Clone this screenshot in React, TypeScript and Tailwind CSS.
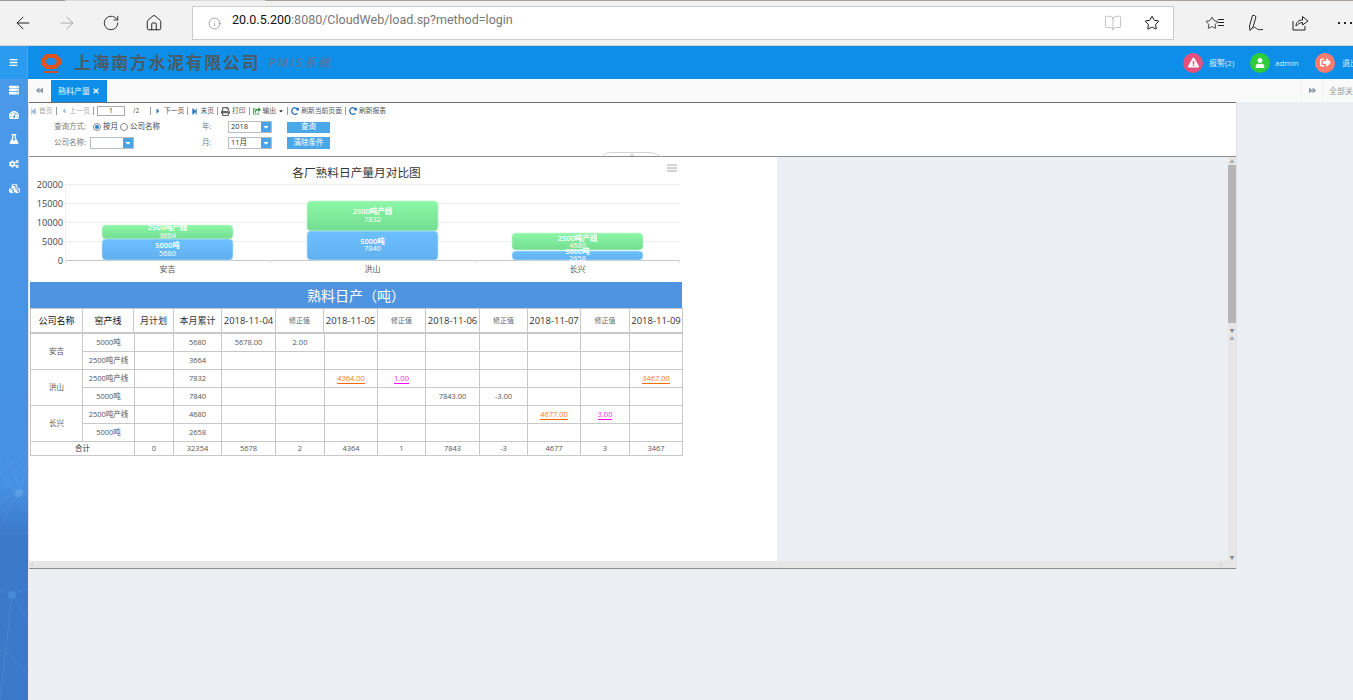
import React from "react";
import { ArrowLeft, ArrowRight, RotateCw, Home, Info, BookOpen, Star } from "lucide-react";
import {
  FaBars, FaServer, FaTachometerAlt, FaFlask, FaCogs, FaCubes, FaExclamationTriangle, FaUser, FaSignOutAlt,
  FaStepBackward, FaStepForward, FaCaretLeft, FaCaretRight, FaPrint, FaShareSquare, FaRedoAlt, FaBackward, FaForward, FaTimes, FaCaretDown,
} from "react-icons/fa";

const cjk = "font-['Open_Sans','Noto_Sans_CJK_SC',sans-serif]";

function Sep() {
  return <span className="mx-[3px] h-[8px] w-px bg-[#9a9a9a]" />;
}

function ToolBtn({ icon, label, color = "text-[#555]" }: { icon: React.ReactNode; label: string; color?: string }) {
  return (
    <span className={`flex items-center gap-[2px] whitespace-nowrap ${color}`}>
      {icon}
      {label}
    </span>
  );
}

function Combo({ value }: { value: string }) {
  return (
    <div className="flex h-[12px] w-[44px] items-center justify-between border border-[#b7bccb] bg-white">
      <span className="pl-[2px] text-[7.5px] leading-none text-[#333]">{value}</span>
      <span className="flex h-full w-[10px] items-center justify-center bg-[#4aa3e6] text-white">
        <FaCaretDown size={8} />
      </span>
    </div>
  );
}

function Toolbar() {
  return (
    <div className="h-[55px] border-y border-t-[#6f6f6f] border-b-[#8e8e8e] bg-white pl-[1px]">
      <div className="flex h-[15px] items-center pt-[1px] text-[6.8px] text-[#999]">
        <ToolBtn color="text-[#aaa]" icon={<FaStepBackward size={7} className="text-[#9db8d8]" />} label="首页" />
        <Sep />
        <ToolBtn color="text-[#aaa]" icon={<FaCaretLeft size={8} className="text-[#9db8d8]" />} label="上一页" />
        <Sep />
        <span className="flex h-[10px] w-[28px] items-center justify-center border border-[#aaa] text-[#444]">1</span>
        <span className="ml-[8px] mr-[7px] w-[7px] text-[#555]">/2</span>
        <Sep />
        <ToolBtn icon={<FaCaretRight size={8} className="text-[#2d74b8]" />} label="下一页" />
        <Sep />
        <ToolBtn icon={<FaStepForward size={7} className="text-[#2d74b8]" />} label="末页" />
        <Sep />
        <ToolBtn icon={<FaPrint size={9} className="text-[#666]" />} label="打印" />
        <Sep />
        <ToolBtn icon={<FaShareSquare size={8} className="text-[#3a9a45]" />} label="输出" />
        <FaCaretDown size={6} className="ml-[2px] text-[#333]" />
        <Sep />
        <ToolBtn icon={<FaRedoAlt size={8} className="text-[#1d6fc0]" />} label="刷新当前页面" />
        <Sep />
        <ToolBtn icon={<FaRedoAlt size={8} className="text-[#1d6fc0]" />} label="刷新报表" />
      </div>
      <div className="mt-[3px] grid grid-cols-[24px_36px_112px_26px_59px_1fr] items-center gap-y-[4px] text-[7.5px] text-[#777]">
        <span className="col-start-2 row-start-1 whitespace-nowrap">查询方式:</span>
        <div className="col-start-3 row-start-1 ml-[3px] flex items-center whitespace-nowrap text-[#444]">
          <span className="mr-[2px] flex h-[8px] w-[8px] items-center justify-center rounded-full border border-[#888]">
            <span className="h-[4px] w-[4px] rounded-full bg-[#2a7fd0]" />
          </span>
          按月
          <span className="ml-[2px] mr-[2px] h-[8px] w-[8px] rounded-full border border-[#888]" />
          公司名称
        </div>
        <span className="col-start-4 row-start-1">年:</span>
        <div className="col-start-5 row-start-1"><Combo value="2018" /></div>
        <span className="col-start-6 row-start-1 flex h-[11px] w-[43px] items-center justify-center bg-[#4aa8e8] text-white">查询</span>
        <span className="col-start-2 row-start-2 whitespace-nowrap">公司名称:</span>
        <div className="col-start-3 row-start-2"><Combo value="" /></div>
        <span className="col-start-4 row-start-2">月:</span>
        <div className="col-start-5 row-start-2"><Combo value="11月" /></div>
        <span className="col-start-6 row-start-2 flex h-[12px] w-[43px] items-center justify-center bg-[#4aa8e8] text-white">清除条件</span>
      </div>
    </div>
  );
}

function Chart() {
  const gridY = [184, 203, 222, 241];
  const cats = [
    { x: 102, name: "安吉", top: { y: 225, h: 14, l: "2500吨产线", v: "3664", ly: 230, vy: 238 }, bot: { y: 239, h: 21, l: "5000吨", v: "5680", ly: 248, vy: 256 } },
    { x: 307, name: "洪山", top: { y: 201, h: 30, l: "2500吨产线", v: "7832", ly: 214, vy: 222 }, bot: { y: 231, h: 29, l: "5000吨", v: "7840", ly: 244, vy: 251 } },
    { x: 512, name: "长兴", top: { y: 233, h: 17, l: "2500吨产线", v: "4680", ly: 241, vy: 248 }, bot: { y: 251, h: 9, l: "5000吨", v: "2658", ly: 254, vy: 261 } },
  ];
  return (
    <svg width="748" height="125" viewBox="29 157 748 125" className="block overflow-visible font-['Open_Sans','Noto_Sans_CJK_SC',sans-serif]">
      <defs>
        <linearGradient id="gGreen" x1="0" y1="0" x2="0" y2="1">
          <stop offset="0" stopColor="#8ef8a8" />
          <stop offset="1" stopColor="#72dc90" />
        </linearGradient>
        <linearGradient id="gBlue" x1="0" y1="0" x2="0" y2="1">
          <stop offset="0" stopColor="#6cc0ff" />
          <stop offset="1" stopColor="#62b0ee" />
        </linearGradient>
      </defs>
      <path d="M602 156.5c2-3 6-4 10-4h36c4 0 9 1 13 4" fill="none" stroke="#d4d4d4" />
      <path d="M630 155.5l2-2 2 2z" fill="#bbb" />
      <text x="356.5" y="177" textAnchor="middle" fontSize="11.7" fill="#333">各厂熟料日产量月对比图</text>
      <path d="M667 165h10M667 168h10M667 171h10" stroke="#a8a8a8" strokeWidth="1" />
      {gridY.map((y) => (
        <line key={y} x1="65.5" x2="680" y1={y + 0.5} y2={y + 0.5} stroke="#eeeeee" />
      ))}
      <line x1="65.5" x2="65.5" y1="184" y2="260" stroke="#eeeeee" />
      <line x1="65" x2="680" y1="260.5" y2="260.5" stroke="#c8c8c8" />
      {[65.5, 270.5, 475.5, 679.5].map((x) => (
        <line key={x} x1={x} x2={x} y1="260" y2="263" stroke="#dddddd" />
      ))}
      {["20000", "15000", "10000", "5000", "0"].map((t, i) => (
        <text key={t} x="63" y={187.5 + i * 19} textAnchor="end" fontSize="9.2" fill="#444">{t}</text>
      ))}
      {cats.map((c) => (
        <g key={c.name}>
          <rect x={c.x} y={c.top.y} width="131" height={c.top.h} rx="4" fill="url(#gGreen)" stroke="#c4f5d2" strokeWidth="0.6" />
          <rect x={c.x} y={c.bot.y} width="131" height={c.bot.h} rx="4" fill="url(#gBlue)" stroke="#bfe2fb" strokeWidth="0.6" />
          <text x={c.x + 65.5} y={c.top.ly} textAnchor="middle" fontSize="7.5" fontWeight="600" fill="#fff">{c.top.l}</text>
          <text x={c.x + 65.5} y={c.top.vy} textAnchor="middle" fontSize="7.5" fill="#fff">{c.top.v}</text>
          <text x={c.x + 65.5} y={c.bot.ly} textAnchor="middle" fontSize="7.5" fontWeight="600" fill="#fff">{c.bot.l}</text>
          <text x={c.x + 65.5} y={c.bot.vy} textAnchor="middle" fontSize="7.5" fill="#fff">{c.bot.v}</text>
          <text x={c.x + 65.5} y="272" textAnchor="middle" fontSize="8" fill="#555">{c.name}</text>
        </g>
      ))}
    </svg>
  );
}

const headCols = [52, 51, 40, 48, 54, 48, 54, 48, 54, 48, 53, 49, 53];
const bodyCols = [52, 52, 39, 48, 54, 49, 53, 48, 54, 48, 53, 49, 53];
const dates = ["2018-11-04", "修正值", "2018-11-05", "修正值", "2018-11-06", "修正值", "2018-11-07", "修正值", "2018-11-09"];

type Cell = { t: string; c?: "o" | "m" };
const o = (t: string): Cell => ({ t, c: "o" });
const m = (t: string): Cell => ({ t, c: "m" });
const p = (t: string): Cell => ({ t });
const __ = p("");

const rows: { co?: string; line: string; sum: string; cells: Cell[] }[] = [
  { co: "安吉", line: "5000吨", sum: "5680", cells: [p("5678.00"), p("2.00"), __, __, __, __, __, __, __] },
  { line: "2500吨产线", sum: "3664", cells: [__, __, __, __, __, __, __, __, __] },
  { co: "洪山", line: "2500吨产线", sum: "7832", cells: [__, __, o("4364.00"), m("1.00"), __, __, __, __, o("3467.00")] },
  { line: "5000吨", sum: "7840", cells: [__, __, __, __, p("7843.00"), p("-3.00"), __, __, __] },
  { co: "长兴", line: "2500吨产线", sum: "4680", cells: [__, __, __, __, __, __, o("4677.00"), m("3.00"), __] },
  { line: "5000吨", sum: "2658", cells: [__, __, __, __, __, __, __, __, __] },
];
const totals = ["0", "32354", "5678", "2", "4364", "1", "7843", "-3", "4677", "3", "3467"];

function ValueCell({ cell }: { cell: Cell }) {
  if (cell.c === "o") return <span className="border-b border-[#ff6a00] text-[#ff7a1a]">{cell.t}</span>;
  if (cell.c === "m") return <span className="border-b border-[#ff00ff] text-[#ff22ee]">{cell.t}</span>;
  return <>{cell.t}</>;
}

function ReportTable() {
  const td = "border border-[#c8c8c8] text-center align-middle p-0 leading-none";
  return (
    <div className="w-[653px] pl-[1px]">
      <div className="flex h-[26px] items-center justify-center bg-[#4f94e0] text-[14px] text-white">熟料日产（吨）</div>
      <table className="w-[652px] table-fixed border-collapse text-[9px] text-[#333]">
        <colgroup>{headCols.map((w, i) => <col key={i} style={{ width: w }} />)}</colgroup>
        <tbody>
          <tr className="h-[24px]">
            <td className={`${td} text-[#111]`}>公司名称</td>
            <td className={`${td} text-[#111]`}>窑产线</td>
            <td className={td}>月计划</td>
            <td className={td}>本月累计</td>
            {dates.map((d, i) => (
              <td key={i} className={`${td} whitespace-nowrap ${i % 2 ? "text-[7px] text-[#666]" : "text-[9.5px]"}`}>{d}</td>
            ))}
          </tr>
        </tbody>
      </table>
      <table className="w-[652px] table-fixed border-collapse text-[7.5px] text-[#555]">
        <colgroup>{bodyCols.map((w, i) => <col key={i} style={{ width: w }} />)}</colgroup>
        <tbody>
          {rows.map((r, i) => (
            <tr key={i} className="h-[18px]">
              {r.co && <td rowSpan={2} className={td}>{r.co}</td>}
              <td className={td}>{r.line}</td>
              <td className={td} />
              <td className={td}>{r.sum}</td>
              {r.cells.map((c, j) => (
                <td key={j} className={td}><ValueCell cell={c} /></td>
              ))}
            </tr>
          ))}
          <tr className="h-[14px]">
            <td colSpan={2} className={`${td} text-[#333]`}>合计</td>
            {totals.map((t, i) => <td key={i} className={td}>{t}</td>)}
          </tr>
        </tbody>
      </table>
    </div>
  );
}

function BrowserBar() {
  return (
    <div className="relative flex h-[46px] items-start border-b border-[#d2d2d2] bg-[#f2f2f2]">
      <div className="absolute left-0 right-0 top-0 flex h-px">
        <span className="w-[65px] bg-[#9a9a9a]" />
        <span className="w-[200px] bg-[#d8d8d8]" />
        <span className="flex-1 bg-[#a8a39c]" />
      </div>
      <div className="flex h-[46px] w-[192px] items-center pb-[1px] pl-[13px]">
        <ArrowLeft size={20} strokeWidth={1.2} className="text-[#222]" />
        <ArrowRight size={20} strokeWidth={1.2} className="ml-[24px] text-[#a8a8a8]" />
        <RotateCw size={18} strokeWidth={1.2} className="ml-[25px] text-[#222]" />
        <Home size={18} strokeWidth={1.3} className="ml-[25px] text-[#222]" />
      </div>
      <div className="mt-[6px] flex h-[34px] w-[982px] items-center border border-[#cccccc] bg-white pl-[15px]">
        <Info size={13} strokeWidth={1.2} className="text-[#777]" />
        <span className="mb-[5px] ml-[11px] font-['Roboto',sans-serif] text-[12.5px] text-[#111]">20.0.5.200<span className="text-[#777]">:8080/CloudWeb/load.sp?method=login</span></span>
        <BookOpen size={18} strokeWidth={1.1} className="ml-auto text-[#b8b8b8]" />
        <Star size={16} strokeWidth={1.5} className="ml-[22px] mr-[13px] text-[#111]" />
      </div>
      <div className="flex h-[46px] flex-1 items-center pb-[1px] pl-[31px] text-[#222]">
        <span className="flex items-center">
          <Star size={14} strokeWidth={1.4} />
          <span className="ml-[-1px] flex flex-col gap-[2px]"><i className="block h-px w-[6px] bg-[#222]" /><i className="block h-px w-[6px] bg-[#222]" /><i className="block h-px w-[6px] bg-[#222]" /></span>
        </span>
        <svg width="16" height="18" viewBox="0 0 16 18" fill="none" stroke="currentColor" strokeWidth="1" className="ml-[24px]">
          <path d="M4.5 1.5 L1.5 12 L2 16.5 L5 13 L8 3 Q7 0.5 4.5 1.5Z" />
          <path d="M5 14.5c1.5-2 2.5-1 3.5 0s2.500 1.500 6.500 1" />
        </svg>
        <svg width="17" height="16" viewBox="0 0 17 16" fill="none" stroke="currentColor" strokeWidth="1" className="ml-[28px]">
          <path d="M1 6v9h12v-4" />
          <path d="M4 11c0-4 3-6 6.500-6V1.500L16 6l-5.500 4V7.500C8 7.500 6 9 4 11z" />
        </svg>
        <svg width="16" height="4" viewBox="0 0 16 4" fill="currentColor" className="ml-[28px]">
          <rect x="1" y="1" width="2" height="2" />
          <rect x="7" y="1" width="2" height="2" />
          <rect x="13" y="1" width="2" height="2" />
        </svg>
      </div>
    </div>
  );
}

function Header() {
  return (
    <div className={`flex h-[33px] items-center bg-[#0d8fe9] ${cjk}`}>
      <div className="flex h-full w-[28px] items-center justify-center border-r border-[#4aa8ee] bg-[#2a9bee] text-white">
        <FaBars size={9} />
      </div>
      <svg width="22" height="22" viewBox="0 0 22 22" className="ml-[12px] mt-[2px]">
        <path d="M6 1h10l5 5v5l-5 5H6l-5-5V6z" fill="#e2521c" />
        <path d="M8 5h6l3 3.500-3 3.500H8L5 8.500z" fill="#1d8ee8" />
        <rect x="4" y="18" width="14" height="2" fill="#c9512a" />
      </svg>
      <span className="ml-[1px] h-[17px] w-px bg-[#5a7d96]" />
      <span className="ml-[10px] whitespace-nowrap text-[17px] font-bold tracking-[1.6px] text-[#4a5a66]">上海南方水泥有限公司</span>
      <span className="ml-[8px] whitespace-nowrap text-[12px] font-bold italic tracking-[2px] text-[#4d79a8]">PMIS系统</span>
      <div className="ml-auto flex items-center text-[8px] text-white">
        <span className="flex h-[20px] w-[20px] items-center justify-center rounded-full bg-[#e8507c]"><FaExclamationTriangle size={11} /></span>
        <span className="ml-[6px] w-[41px] text-[#dff0ff]">报警(2)</span>
        <span className="flex h-[20px] w-[20px] items-center justify-center rounded-full bg-[#2ecb3a]"><FaUser size={10} /></span>
        <span className="ml-[5px] w-[40px] text-[#dff0ff]">admin</span>
        <span className="flex h-[20px] w-[20px] items-center justify-center rounded-full bg-[#ff7b6e]"><FaSignOutAlt size={11} /></span>
        <span className="ml-[7px] w-[11px] overflow-hidden whitespace-nowrap text-[#dff0ff]">退出</span>
      </div>
    </div>
  );
}

function Sidebar() {
  return (
    <div className="relative flex w-[28px] flex-col items-center overflow-hidden bg-gradient-to-b from-[#4a99e9] via-[#4690e2] via-65% to-[#3b78c9] to-74% pt-[6px] text-white">
      <div className="flex flex-col items-center gap-[14.5px]">
        <FaServer size={10} />
        <FaTachometerAlt size={10} />
        <FaFlask size={10} />
        <FaCogs size={10} />
        <FaCubes size={11} />
      </div>
      <svg width="28" height="300" viewBox="0 0 28 300" className="absolute bottom-0 left-0" fill="none" stroke="#72b0ee" strokeWidth="0.5" opacity="0.45">
        <path d="M19 93L0 126M19 93L28 110M19 93L28 60M19 93L12 60M19 93L0 100M0 74L28 50M0 84L28 58M0 94L28 66M0 104L28 76M0 114L28 86M6 60L28 100M0 70L24 110M0 133H28" />
        <path d="M12 195L0 190M12 195L0 300M12 195L28 220M12 195L28 188M0 250Q14 255 28 275" />
        <circle cx="19" cy="93" r="4" fill="#7ab6f0" stroke="none" />
        <circle cx="12" cy="195" r="4" fill="#5f9fe6" stroke="none" />
      </svg>
    </div>
  );
}

function TabBar() {
  return (
    <div className="flex h-[23px] bg-[#fafafa] text-[8px]">
      <div className="flex w-[23px] items-center justify-center text-[#8a9aa8]"><FaBackward size={7} /></div>
      <div className="mt-[1px] flex h-[22px] w-[56px] items-center justify-center gap-[2px] bg-[#0d8fe9] text-[#e6f4ff]">
        熟料产量
        <FaTimes size={8} />
      </div>
      <div className="ml-auto flex">
        <div className="flex w-[22px] items-center justify-center border-x border-[#eeeeee] text-[#8a9aa8]"><FaForward size={7} /></div>
        <div className="w-[30px] overflow-hidden whitespace-nowrap pl-[6px] leading-[23px] text-[#999]">全部关闭</div>
      </div>
    </div>
  );
}

export default function App() {
  return (
    <div className="flex h-[700px] w-[1353px] flex-col overflow-hidden bg-[#ebeef3]">
      <BrowserBar />
      <Header />
      <div className={`flex flex-1 ${cjk}`}>
        <Sidebar />
        <div className="min-w-0 flex-1">
          <TabBar />
          <div className="w-[1209px] border-l border-r border-[#dfe2e6]">
            <Toolbar />
            <div className="flex h-[404px]">
              <div className="w-[748px] bg-white">
                <Chart />
                <ReportTable />
              </div>
              <div className="flex-1" />
              <div className="flex w-[8px] flex-col bg-[#e6e6e6] text-center text-[5px] leading-[8px]">
                <div className="h-[8px] text-[#aaa]">▲</div>
                <div className="h-[158px] bg-[#b5b5b5]" />
                <div className="mt-[3px] h-[8px] text-[#888]">▼</div>
                <div className="h-[8px] text-[#aaa]">▲</div>
                <div className="mt-auto h-[8px] text-[#888]">▼</div>
              </div>
            </div>
            <div className="flex h-[8px] items-center justify-between border-b border-[#8e8e8e] bg-[#e6e6e6] px-[2px] text-[7px] leading-none text-[#aaa]">
              <span>‹</span>
              <span className="mr-[12px]">›</span>
            </div>
          </div>
        </div>
      </div>
    </div>
  );
}
